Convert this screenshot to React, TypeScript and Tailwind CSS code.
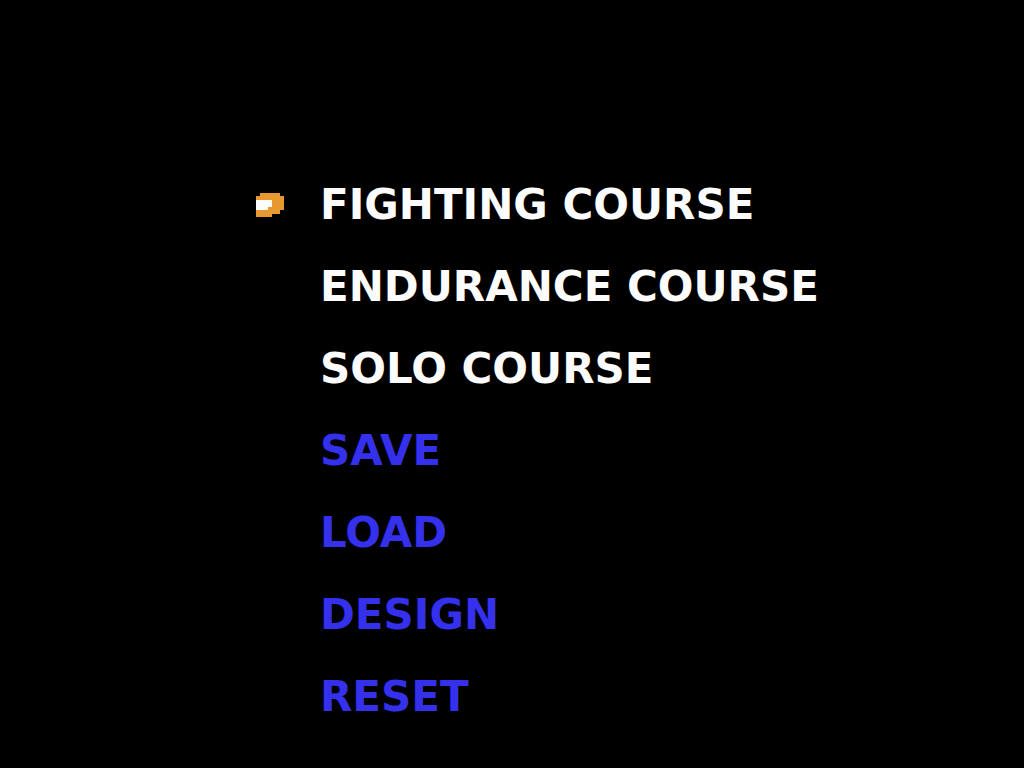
const items = [
  { label: "FIGHTING COURSE", color: "text-[#fcfcfc]" },
  { label: "ENDURANCE COURSE", color: "text-[#fcfcfc]" },
  { label: "SOLO COURSE", color: "text-[#fcfcfc]" },
  { label: "SAVE", color: "text-[#3430ec]" },
  { label: "LOAD", color: "text-[#3430ec]" },
  { label: "DESIGN", color: "text-[#3430ec]" },
  { label: "RESET", color: "text-[#3430ec]" },
];

function Cursor() {
  return (
    <svg className="h-6 w-7" viewBox="0 0 28 24" shapeRendering="crispEdges" aria-hidden="true">
      <path fill="#e89830" d="M4 0H24V3H28V17H24V21H16V24H0V3H4Z" />
      <path fill="#fcfcfc" d="M0 7H16V14H12V17H0Z" />
    </svg>
  );
}

export default function App() {
  return (
    <main className="min-h-screen bg-black pt-[185px] pb-8 pl-[25%] font-['DejaVu_Sans',sans-serif] text-[42px] leading-10 font-bold">
      <nav>
        <ul className="flex flex-col gap-[42px]">
          {items.map((item, index) => (
            <li key={item.label} className="flex items-center">
              <span className="flex w-16 shrink-0 items-center">{index === 0 && <Cursor />}</span>
              <button type="button" className={`cursor-pointer text-left whitespace-nowrap ${item.color}`}>
                {item.label}
              </button>
            </li>
          ))}
        </ul>
      </nav>
    </main>
  );
}
